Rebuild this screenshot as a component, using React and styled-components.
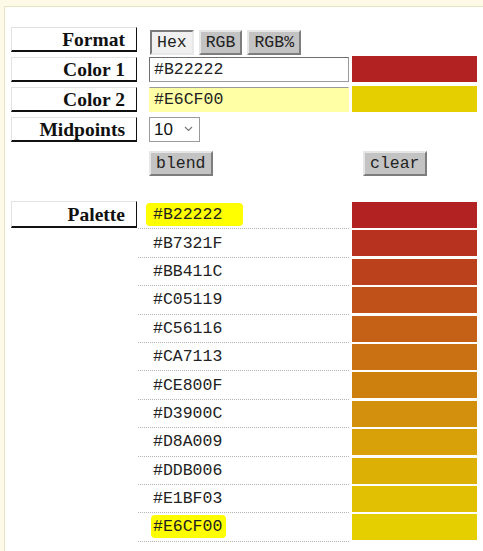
import React from 'react';
import styled, { createGlobalStyle } from 'styled-components';

const PALETTE = [
  '#B22222',
  '#B7321F',
  '#BB411C',
  '#C05119',
  '#C56116',
  '#CA7113',
  '#CE800F',
  '#D3900C',
  '#D8A009',
  '#DDB006',
  '#E1BF03',
  '#E6CF00',
];

const GlobalStyle = createGlobalStyle`
  html, body {
    margin: 0;
    padding: 0;
    background: #fdfbe8;
  }
  body {
    font-family: "Liberation Serif", serif;
    overflow: hidden;
  }
`;

const ChevronDown = () => (
  <svg width="9" height="6" viewBox="0 0 9 6" fill="none">
    <path d="M1 1l3.5 3.5L8 1" stroke="#777" strokeWidth="1.1" />
  </svg>
);

const App = () => {
  const last = PALETTE.length - 1;
  return (
    <>
      <GlobalStyle />
      <Panel>
        <FormRow>
          <Label>Format</Label>
          <Cell>
            <ToggleGroup>
              <ToolButton $pressed>Hex</ToolButton>
              <ToolButton>RGB</ToolButton>
              <ToolButton>RGB%</ToolButton>
            </ToggleGroup>
          </Cell>
        </FormRow>
        <FormRow>
          <Label>Color 1</Label>
          <Cell>
            <ColorInput defaultValue="#B22222" />
          </Cell>
          <Swatch style={{ background: '#B22222' }} />
        </FormRow>
        <FormRow>
          <Label>Color 2</Label>
          <Cell>
            <ColorInput $active defaultValue="#E6CF00" />
          </Cell>
          <Swatch style={{ background: '#E6CF00' }} />
        </FormRow>
        <FormRow>
          <Label>Midpoints</Label>
          <Cell>
            <SelectWrap>
              <Select defaultValue="10">
                {[1, 2, 3, 4, 5, 6, 7, 8, 9, 10, 11, 12].map(n => (
                  <option key={n} value={n}>
                    {n}
                  </option>
                ))}
              </Select>
              <Chevron>
                <ChevronDown />
              </Chevron>
            </SelectWrap>
          </Cell>
        </FormRow>
        <ActionRow>
          <span />
          <Cell>
            <ToolButton>blend</ToolButton>
          </Cell>
          <ClearCell>
            <ToolButton>clear</ToolButton>
          </ClearCell>
        </ActionRow>

        <PaletteList>
          {PALETTE.map((hex, i) => (
            <PaletteRow key={hex}>
              {i === 0 ? <Label $tall>Palette</Label> : <span />}
              <HexCell>
                {i === 0 ? (
                  <Marker $left={7} $right={21}>
                    {hex}
                  </Marker>
                ) : i === last ? (
                  <Marker $left={2} $right={4}>
                    {hex}
                  </Marker>
                ) : (
                  hex
                )}
              </HexCell>
              <PaletteSwatch style={{ background: hex }} />
            </PaletteRow>
          ))}
        </PaletteList>
      </Panel>
    </>
  );
};

const Panel = styled.div`
  margin: 6px 0 0 4px;
  min-height: 560px;
  background: #fff;
  border-top: 1px solid #e6e2c4;
  border-left: 1px solid #e6e2c4;
  padding: 20px 0 0 6px;
  box-sizing: border-box;
`;

const FormRow = styled.div`
  display: grid;
  grid-template-columns: 126px 215px 125px;
  height: 25px;
  margin-bottom: 5px;
`;

const ActionRow = styled(FormRow)`
  margin-top: 9px;
  margin-bottom: 25px;
`;

const Label = styled.div`
  box-sizing: border-box;
  height: ${p => (p.$tall ? '27px' : '25px')};
  display: flex;
  align-items: center;
  justify-content: flex-end;
  padding: 2px 11px 0 0;
  font-family: "Liberation Serif", "Times New Roman", serif;
  font-weight: bold;
  font-size: 19.5px;
  color: #111;
  background: #fff;
  border-top: 1px solid #e2e2e2;
  border-left: 1px solid #e2e2e2;
  border-right: 1px solid #111;
  border-bottom: 2px solid #111;
`;

const Cell = styled.div`
  display: flex;
  align-items: center;
  padding-left: 12px;
`;

const ClearCell = styled(Cell)`
  padding-left: 11px;
`;

const ToggleGroup = styled.div`
  display: flex;
  gap: 5px;
  margin-top: 3px;
  margin-left: 1px;
`;

const ToolButton = styled.button`
  box-sizing: border-box;
  height: 25px;
  padding: 0 5px;
  font-family: "Liberation Mono", "Courier New", monospace;
  font-size: 16.5px;
  color: #222;
  background: ${p => (p.$pressed ? '#f0f0f0' : '#c3c3c3')};
  border: 2px solid;
  border-color: ${p =>
    p.$pressed
      ? '#7a7a7a #e8e8e8 #e8e8e8 #7a7a7a'
      : '#e6e6e6 #7d7d7d #7d7d7d #e6e6e6'};
  cursor: pointer;
`;

const ColorInput = styled.input`
  box-sizing: border-box;
  width: 200px;
  height: 25px;
  padding: 0 4px;
  font-family: "Liberation Mono", "Courier New", monospace;
  font-size: 16.5px;
  color: #222;
  outline: none;
  background: ${p => (p.$active ? '#ffffa6' : '#fff')};
  border: 1px solid;
  border-color: ${p =>
    p.$active ? '#999 #ffffa6 #ffffa6 #ffffa6' : '#6f6f6f #9a9a9a #9a9a9a #6f6f6f'};
`;

const Swatch = styled.div`
  margin-top: -1px;
  height: 26px;
`;

const SelectWrap = styled.div`
  position: relative;
  width: 51px;
  height: 25px;
`;

const Select = styled.select`
  appearance: none;
  box-sizing: border-box;
  width: 100%;
  height: 100%;
  padding: 0 0 0 4px;
  font-family: "Liberation Sans", Arial, sans-serif;
  font-size: 17px;
  color: #111;
  background: #fff;
  border: 1px solid #9a9a9a;
  border-radius: 0;
  outline: none;
`;

const Chevron = styled.span`
  position: absolute;
  right: 7px;
  top: 9px;
  line-height: 0;
  pointer-events: none;
`;

const PaletteList = styled.div`
  display: flex;
  flex-direction: column;
`;

const PaletteRow = styled.div`
  display: grid;
  grid-template-columns: 126px 215px 125px;
  height: 28.4px;
`;

const HexCell = styled.div`
  display: flex;
  align-items: center;
  margin-left: 1px;
  margin-right: 3px;
  padding-left: 15px;
  border-bottom: 1px dotted #b5b5b5;
  font-family: "Liberation Mono", "Courier New", monospace;
  font-size: 16.5px;
  color: #222;
`;

const Marker = styled.span`
  background: #ffff00;
  border-radius: 4px;
  padding: 2px ${p => p.$right}px 2px ${p => p.$left}px;
  margin-left: -${p => p.$left}px;
`;

const PaletteSwatch = styled.div`
  margin: 1px 0 1.4px;
`;

export default App;
